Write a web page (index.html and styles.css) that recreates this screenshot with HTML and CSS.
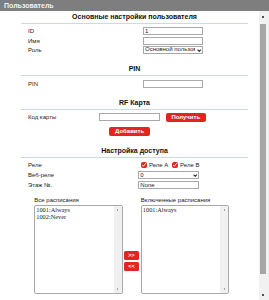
FILE: index.html
```html
<!DOCTYPE html>
<html lang="ru">
<head>
<meta charset="utf-8">
<title>Пользователь</title>
<link rel="stylesheet" href="styles.css">
</head>
<body>
<div class="window">
  <div class="titlebar">Пользователь</div>
  <div class="panel">
    <div class="form-area">
      <div class="form">
        <h2 class="sect-title first">Основные настройки пользователя</h2>
        <div class="fields">
          <label class="lbl" for="uid">ID</label>
          <input class="txt" id="uid" value="1">
          <label class="lbl" for="uname">Имя</label>
          <input class="txt" id="uname">
          <label class="lbl" for="urole">Роль</label>
          <span class="sel-wrap">
            <select class="sel" id="urole"><option>Основной пользователь</option></select>
            <svg class="chev" viewBox="0 0 8 5" width="4.5" height="3"><polyline points="1,1 4,4 7,1" fill="none" stroke="#222" stroke-width="1.9"/></svg>
          </span>
        </div>

        <h2 class="sect-title">PIN</h2>
        <div class="fields">
          <label class="lbl" for="upin">PIN</label>
          <input class="txt" id="upin">
        </div>

        <h2 class="sect-title">RF Карта</h2>
        <div class="card-row">
          <label class="lbl card-lbl" for="ucard">Код карты</label>
          <input class="txt card-input" id="ucard">
          <button class="btn get-btn" type="button">Получить</button>
        </div>
        <div class="add-row">
          <button class="btn add-btn" type="button">Добавить</button>
        </div>

        <h2 class="sect-title">Настройка доступа</h2>
        <div class="fields access">
          <span class="lbl">Реле</span>
          <span class="checks">
            <label class="check"><input type="checkbox" checked>Реле А</label>
            <label class="check"><input type="checkbox" checked>Реле В</label>
          </span>
          <label class="lbl" for="wrelay">Веб-реле</label>
          <span class="sel-wrap">
            <select class="sel wide" id="wrelay"><option>0</option></select>
            <svg class="chev" viewBox="0 0 8 5" width="4.5" height="3"><polyline points="1,1 4,4 7,1" fill="none" stroke="#222" stroke-width="1.9"/></svg>
          </span>
          <label class="lbl" for="floor">Этаж №.</label>
          <input class="txt wide" id="floor" value="None">
        </div>

        <div class="schedules">
          <div class="list-col">
            <label class="list-lbl" for="allsch">Все расписания</label>
            <div class="listbox-wrap">
              <select class="listbox" id="allsch" multiple size="12">
                <option>1001:Always</option>
                <option>1002:Never</option>
              </select>
              <span class="lb-scroll" aria-hidden="true"><span class="lb-btn up"></span><span class="lb-btn down"></span></span>
            </div>
          </div>
          <div class="move-btns">
            <button class="btn move-btn" type="button">&gt;&gt;</button>
            <button class="btn move-btn" type="button">&lt;&lt;</button>
          </div>
          <div class="list-col">
            <label class="list-lbl" for="onsch">Включенные расписания</label>
            <div class="listbox-wrap">
              <select class="listbox" id="onsch" multiple size="12">
                <option>1001:Always</option>
              </select>
              <span class="lb-scroll" aria-hidden="true"><span class="lb-btn up"></span><span class="lb-btn down"></span></span>
            </div>
          </div>
        </div>
      </div>
    </div>
    <div class="vscroll" aria-hidden="true">
      <span class="sb-btn up"></span>
      <span class="sb-track"><span class="sb-thumb"></span></span>
      <span class="sb-btn down"></span>
    </div>
  </div>
</div>
</body>
</html>
```
FILE: styles.css
```css
html, body {
  margin: 0;
  padding: 0;
  background: #ffffff;
}

body {
  width: 269px;
  height: 300px;
  overflow: hidden;
  font-family: "Liberation Sans", Arial, sans-serif;
  font-size: 6px;
  color: #222222;
}

.titlebar {
  height: 11px;
  line-height: 11px;
  padding-left: 4px;
  background: #7e7e7e;
  color: #f2f2f2;
  font-weight: bold;
  font-size: 7px;
}

.panel {
  display: flex;
  height: 289px;
  overflow: hidden;
}

.form-area {
  flex: 1;
  overflow: hidden;
}

/* decorative page scrollbar */
.vscroll {
  display: flex;
  flex-direction: column;
  width: 10px;
  background: #f1f1f1;
}

.sb-btn {
  display: block;
  height: 10px;
  background-repeat: no-repeat;
  background-size: 4px 3px;
  background-position: 2px center;
}

.sb-btn.up {
  background-image: conic-gradient(from 150deg at 50% 0, #505050 0 60deg, transparent 0);
}

.sb-btn.down {
  background-image: conic-gradient(from 330deg at 50% 100%, #505050 0 60deg, transparent 0);
}

.sb-track {
  display: block;
  flex: 1;
  padding-top: 3px;
}

.sb-thumb {
  display: block;
  width: 6px;
  height: 250px;
  margin-left: 1px;
  background: #a6a6a6;
}

.form {
  width: 227px;
  margin-left: 21px;
}

.sect-title {
  margin: 10px 0 0;
  padding-bottom: 2px;
  border-bottom: 1px solid #c9d8ec;
  font-size: 7px;
  line-height: 9px;
  font-weight: bold;
  text-align: center;
  color: #111111;
}

.sect-title.first {
  margin-top: 0.5px;
}

.fields {
  display: grid;
  grid-template-columns: 115px 60px;
  row-gap: 1.5px;
  align-items: center;
  padding-left: 7px;
  margin-top: 3.5px;
}

.fields.access {
  grid-template-columns: 110.3px 61px;
  row-gap: 2px;
  margin-top: 3px;
}

.lbl {
  line-height: 8px;
  color: #222222;
}

.txt,
.sel {
  box-sizing: border-box;
  height: 8px;
  width: 60px;
  margin: 0;
  border: 1px solid #a9a9a9;
  background: #ffffff;
  font-family: "Liberation Sans", Arial, sans-serif;
  font-size: 6px;
  color: #222222;
  padding: 0 1px;
  outline: none;
}

.sel {
  -webkit-appearance: none;
  appearance: none;
  height: 7.5px;
  line-height: 5px;
  padding: 0 7px 0 1px;
  border-radius: 0;
}

.wide {
  width: 61px;
}

.sel.wide {
  height: 8px;
}

.sel-wrap {
  position: relative;
  display: block;
  height: 8px;
}

.chev {
  position: absolute;
  right: 2px;
  top: 2.5px;
}

.card-row {
  display: flex;
  align-items: center;
  padding-left: 7px;
  margin-top: 3px;
}

.card-lbl {
  width: 71.3px;
}

.card-input {
  width: 61px;
}

.btn {
  box-sizing: border-box;
  margin: 0;
  padding: 0;
  border: none;
  border-radius: 2px;
  background: #e5241e;
  color: #ffffff;
  font-family: "Liberation Sans", Arial, sans-serif;
  font-weight: bold;
  font-size: 6px;
  line-height: 9px;
}

.get-btn {
  width: 40px;
  height: 9.5px;
  margin-left: 5.5px;
}

.add-row {
  padding-left: 88.3px;
  margin-top: 4.5px;
}

.add-btn {
  width: 40.7px;
  height: 9.5px;
}

.checks {
  display: flex;
  align-items: center;
  height: 8px;
  white-space: nowrap;
}

.check {
  display: flex;
  align-items: center;
  gap: 2px;
  white-space: nowrap;
  color: #222222;
}

.check + .check {
  margin-left: 3.7px;
}

.check input {
  flex: none;
  width: 6px;
  height: 6px;
  margin: 0;
  accent-color: #e5241e;
}

.checks .check:first-child {
  margin-left: 2.7px;
}

.schedules {
  display: flex;
  align-items: flex-start;
  margin: 8px 0 0 13.3px;
}

.list-col {
  display: flex;
  flex-direction: column;
  width: 88.4px;
}

.list-lbl {
  line-height: 7px;
  color: #222222;
  white-space: nowrap;
}

.listbox-wrap {
  position: relative;
  margin-top: 0.5px;
}

.listbox {
  display: block;
  box-sizing: border-box;
  width: 100%;
  height: 89.5px;
  margin: 0;
  padding: 0;
  border: 1px solid #a9a9a9;
  font-family: "Liberation Serif", "Times New Roman", serif;
  font-size: 6.3px;
  color: #222222;
  overflow: hidden;
  outline: none;
}

.listbox option {
  padding: 0 1px;
}

/* decorative listbox scrollbar drawn over the select's right edge */
.lb-scroll {
  position: absolute;
  top: 1px;
  bottom: 1px;
  right: 1px;
  width: 8px;
  display: flex;
  flex-direction: column;
  justify-content: space-between;
  background: #f0f0f0;
}

.lb-btn {
  display: block;
  height: 8px;
  background-repeat: no-repeat;
  background-size: 3px 2px;
  background-position: center;
}

.lb-btn.up {
  background-image: conic-gradient(from 150deg at 50% 0, #a3a3a3 0 60deg, transparent 0);
}

.lb-btn.down {
  background-image: conic-gradient(from 330deg at 50% 100%, #a3a3a3 0 60deg, transparent 0);
}

.move-btns {
  display: flex;
  flex-direction: column;
  gap: 2px;
  width: 15.3px;
  margin: 53.7px 1.7px 0 1.2px;
}

.move-btn {
  width: 15.3px;
  height: 9.3px;
  border-radius: 1.5px;
  font-size: 5.5px;
}
```
